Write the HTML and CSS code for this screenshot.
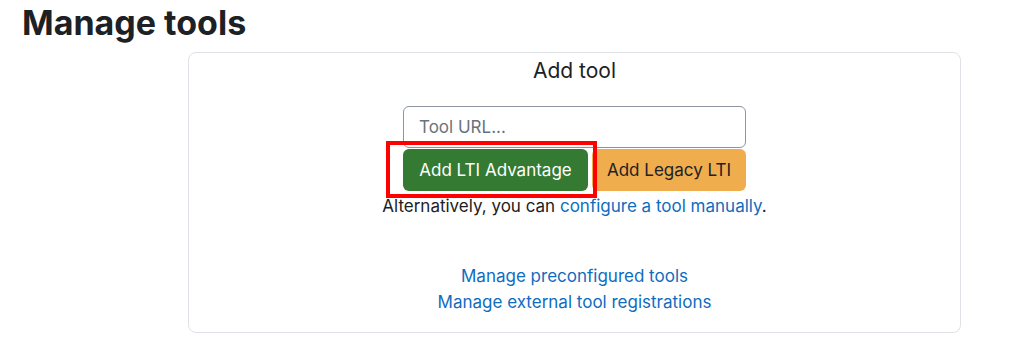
FILE: index.html
```html
<!DOCTYPE html>
<html lang="en">
<head>
    <meta charset="UTF-8">
    <meta name="viewport" content="width=device-width, initial-scale=1.0">
    <title>Manage tools</title>
    <link rel="stylesheet" href="styles.css">
</head>
<body>
    <h1 class="page-title">Manage tools</h1>

    <div class="card">
        <h2 class="card-title">Add tool</h2>

        <div class="add-form">
            <input type="text" class="tool-url" placeholder="Tool URL...">
            <div class="btn-row">
                <button class="btn btn-green highlighted">Add LTI Advantage</button>
                <button class="btn btn-orange">Add Legacy LTI</button>
            </div>
        </div>

        <p class="alt-text">Alternatively, you can <a href="#">configure a tool manually</a>.</p>

        <div class="manage-links">
            <a href="#">Manage preconfigured tools</a>
            <a href="#">Manage external tool registrations</a>
        </div>
    </div>
</body>
</html>
```

FILE: styles.css
```css
body {
    margin: 0;
    font-family: Inter, "Noto Sans", sans-serif;
    color: #1d2125;
    background: white;
}

.page-title {
    margin: 0;
    padding: 3px 0 0 22px;
    font-size: 34px;
    font-weight: 700;
    line-height: 40px;
}

.card {
    box-sizing: border-box;
    width: 773px;
    height: 281px;
    margin: 9px 0 0 188px;
    padding: 6px 0 0;
    border: 1px solid #dee2e6;
    border-radius: 8px;
    text-align: center;
}

.card-title {
    margin: 0;
    font-size: 21px;
    font-weight: 400;
    line-height: 24px;
}

.add-form {
    width: 343px;
    margin: 23px auto 0;
}

.tool-url {
    box-sizing: border-box;
    display: block;
    width: 100%;
    height: 42px;
    margin: 0;
    padding: 0 15px;
    border: 1px solid #8f959e;
    border-radius: 6px;
    font-family: inherit;
    font-size: 17px;
    color: #1d2125;
}
.tool-url::placeholder { color: #6a737b; }

.btn-row {
    display: flex;
    gap: 4px;
    margin-top: 1px;
}

.btn {
    height: 42px;
    padding: 0 8px;
    border: none;
    border-radius: 6px;
    font-family: inherit;
    font-size: 17px;
    white-space: nowrap;
    cursor: pointer;
}

.btn-green {
    flex: 0 0 185px;
    background-color: #357a32;
    color: white;
}

.btn-orange {
    flex: 1;
    background-color: #f0ad4e;
    color: #1d2125;
}

/* red box drawn around the LTI Advantage button */
.highlighted { position: relative; }
.highlighted::after {
    content: "";
    position: absolute;
    top: -8px;
    left: -17px;
    right: -9px;
    bottom: -7px;
    border: 4px solid #ff0000;
}

.alt-text {
    margin: 3px 0 0;
    font-size: 17px;
    line-height: 24px;
}

a {
    color: #0f6cbf;
    text-decoration: none;
}

.manage-links {
    margin-top: 45px;
}

.manage-links a {
    display: block;
    font-size: 17px;
    line-height: 26px;
}
```
